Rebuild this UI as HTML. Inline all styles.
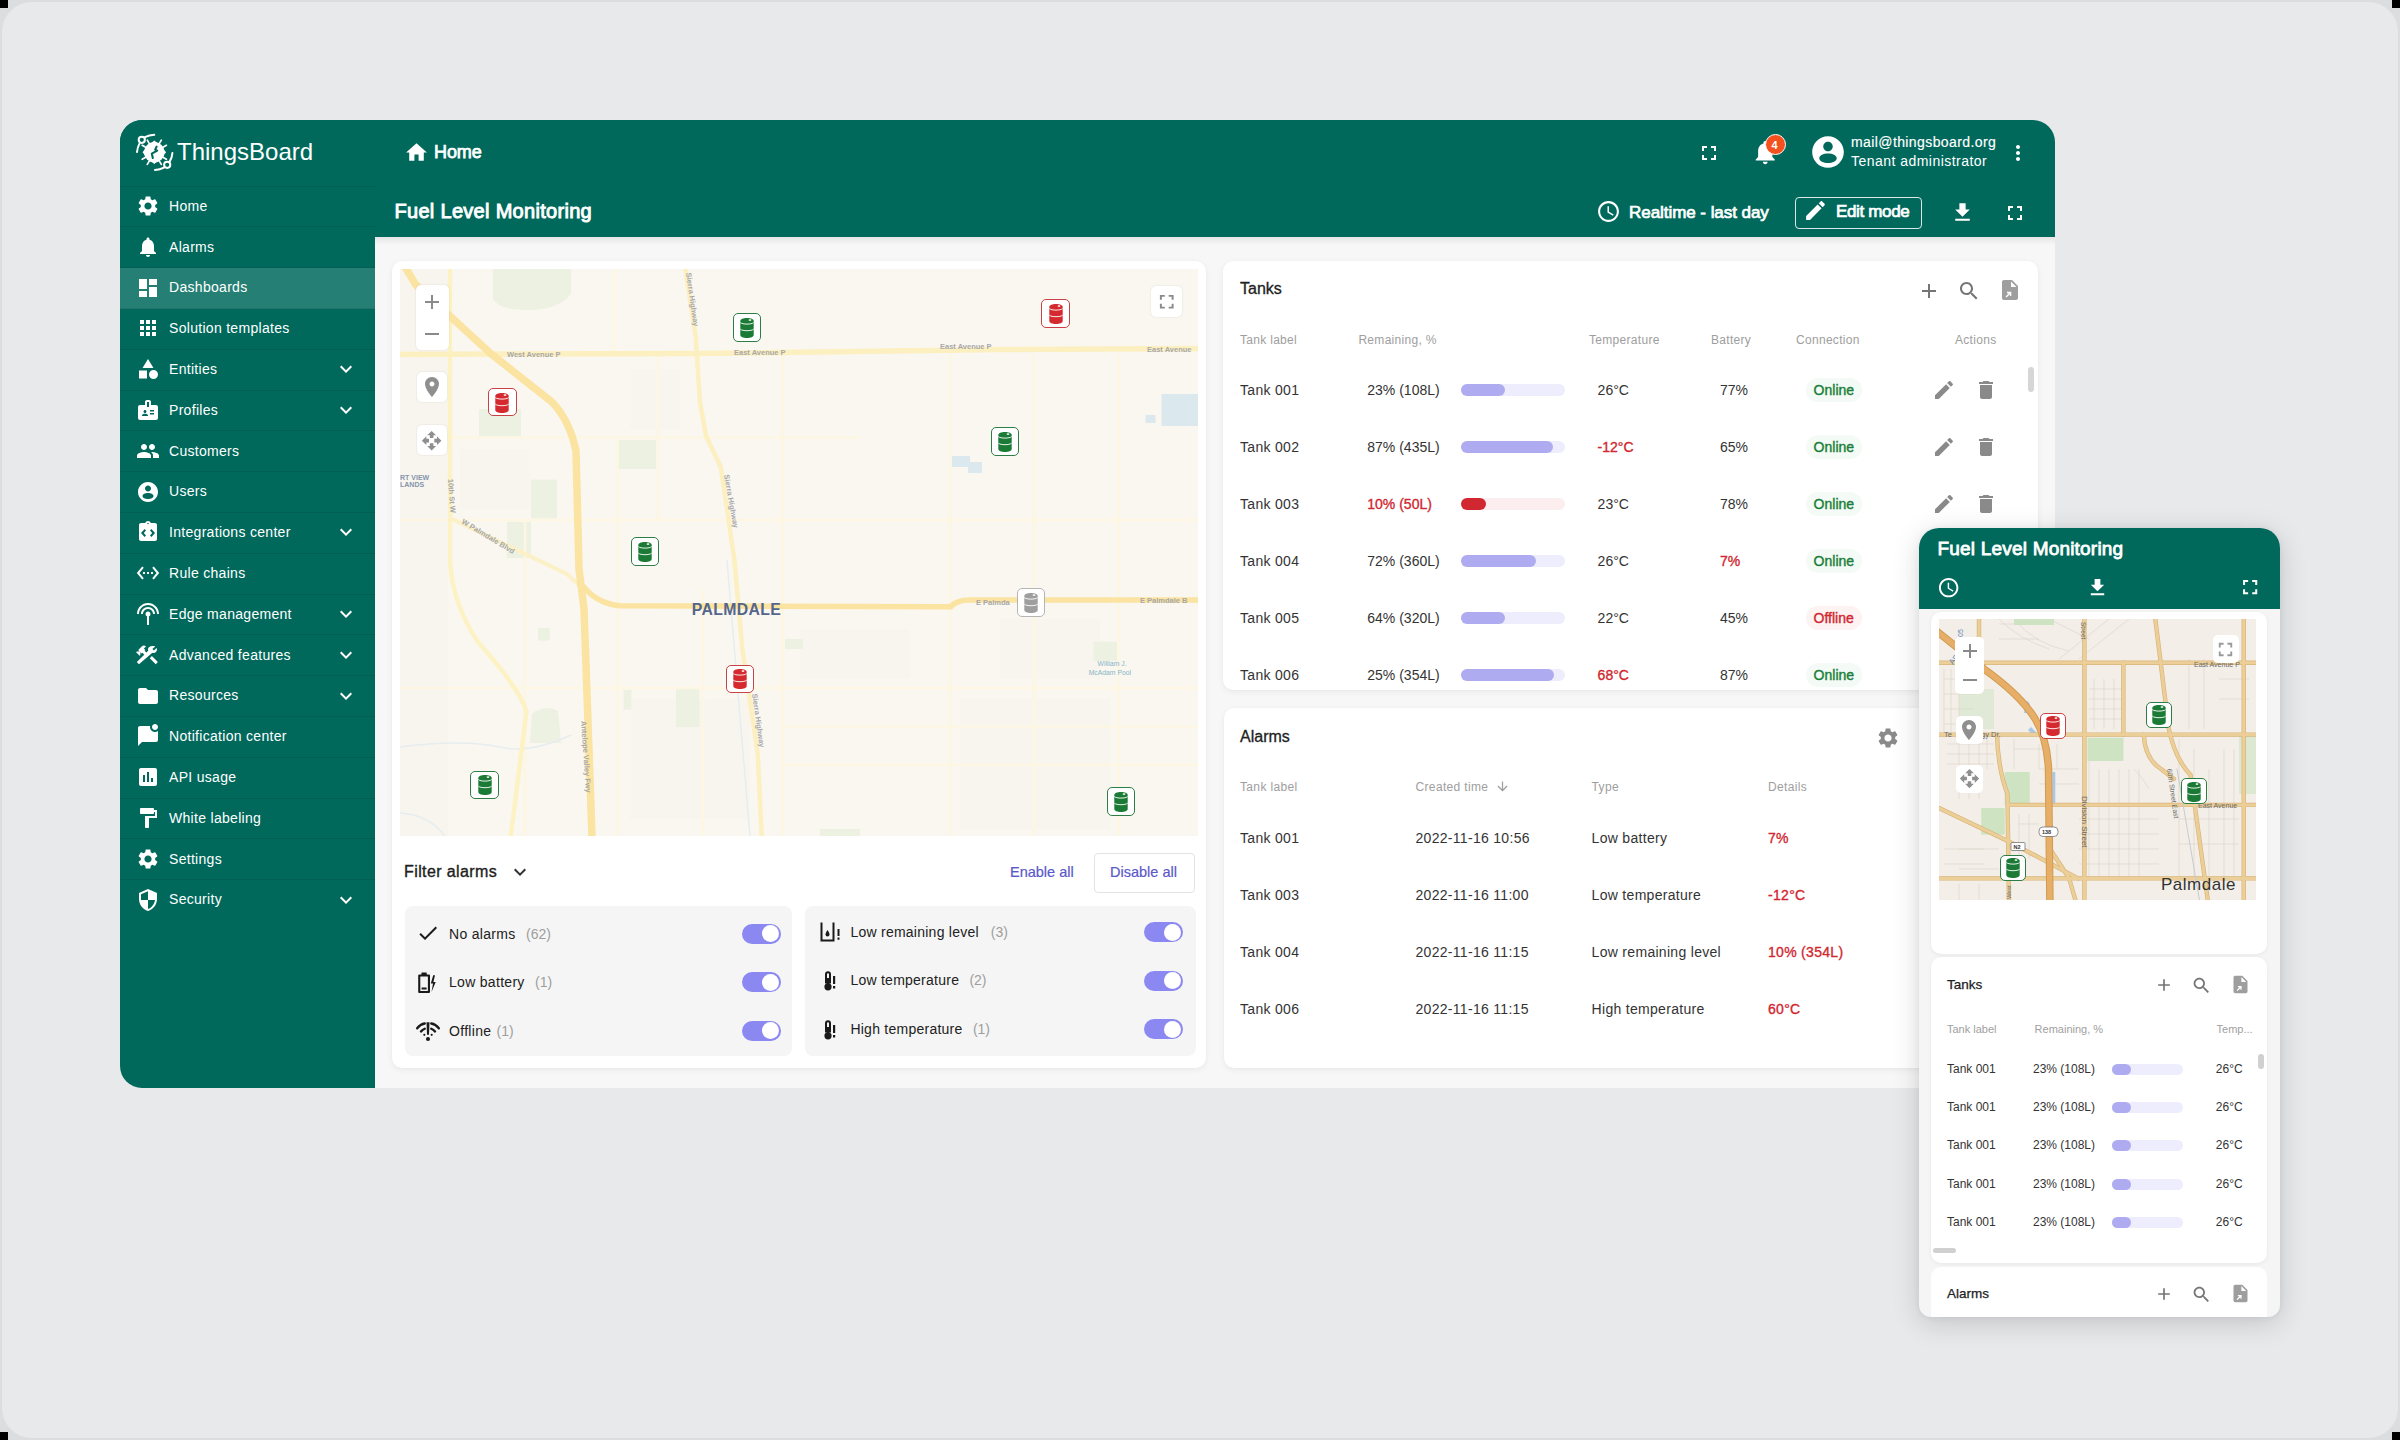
<!DOCTYPE html>
<html><head><meta charset="utf-8">
<style>
*{margin:0;padding:0;box-sizing:border-box}
html,body{width:2400px;height:1440px;overflow:hidden;background:#dcdddf}
body{font-family:"Liberation Sans",sans-serif;position:relative}
.abs{position:absolute}
.t{position:absolute;white-space:nowrap;line-height:1}
svg.i{position:absolute;overflow:visible}
</style></head>
<body>

<div class="abs" style="left:2px;top:2px;width:2396px;height:1436px;background:#e8e9eb;border-radius:30px"></div>
<div class="abs" style="left:0px;top:0px;width:8px;height:8px;background:#000"></div>
<div class="abs" style="left:2392px;top:0px;width:8px;height:8px;background:#000"></div>
<div class="abs" style="left:0px;top:1432px;width:8px;height:8px;background:#000"></div>
<div class="abs" style="left:2392px;top:1432px;width:8px;height:8px;background:#000"></div>
<div class="abs" style="left:120px;top:120px;width:1935px;height:968px;background:#f7f7f7;border-radius:22px 22px 0 22px"></div>
<div class="abs" style="left:120px;top:120px;width:1935px;height:117px;background:#00695c;border-radius:22px 22px 0 0"></div>
<div class="abs" style="left:120px;top:120px;width:255px;height:968px;background:#00695c;border-radius:22px 0 0 22px"></div>
<div class="abs" style="left:375px;top:237px;width:1680px;height:8px;background:linear-gradient(rgba(0,0,0,0.07),rgba(0,0,0,0))"></div>
<div class="abs" style="left:120px;top:186px;width:255px;height:1px;background:rgba(0,0,0,0.10)"></div>
<div class="abs" style="left:120px;top:226.4px;width:255px;height:1px;background:rgba(0,0,0,0.09)"></div>
<svg class="i" style="left:136px;top:194.0px;width:24px;height:24px" viewBox="0 0 24 24"><path fill="#fff" d="M19.14 12.94c.04-.3.06-.61.06-.94 0-.32-.02-.64-.07-.94l2.03-1.58c.18-.14.23-.41.12-.61l-1.92-3.32c-.12-.22-.37-.29-.59-.22l-2.39.96c-.5-.38-1.03-.7-1.62-.94l-.36-2.54c-.04-.24-.24-.41-.48-.41h-3.84c-.24 0-.43.17-.47.41l-.36 2.54c-.59.24-1.13.57-1.62.94l-2.39-.96c-.22-.08-.47 0-.59.22L2.74 8.87c-.12.21-.08.47.12.61l2.03 1.58c-.05.3-.09.63-.09.94s.02.64.07.94l-2.03 1.58c-.18.14-.23.41-.12.61l1.92 3.32c.12.22.37.29.59.22l2.39-.96c.5.38 1.03.7 1.62.94l.36 2.54c.05.24.24.41.48.41h3.84c.24 0 .44-.17.47-.41l.36-2.54c.59-.24 1.130-.56 1.62-.94l2.39.96c.22.08.47 0 .59-.22l1.92-3.32c.12-.22.07-.47-.12-.61l-2.01-1.58zM12 15.6c-1.98 0-3.6-1.62-3.6-3.6s1.62-3.6 3.6-3.6 3.6 1.62 3.6 3.6-1.62 3.6-3.6 3.6z"/></svg>
<div class="t" style="left:169.00px;top:198.75px;font-size:14px;color:#fff;letter-spacing:0.3px;">Home</div>
<div class="abs" style="left:120px;top:267.2px;width:255px;height:1px;background:rgba(0,0,0,0.09)"></div>
<svg class="i" style="left:136px;top:234.8px;width:24px;height:24px" viewBox="0 0 24 24"><path fill="#fff" d="M12 22c1.1 0 2-.9 2-2h-4c0 1.1.89 2 2 2zm6-6v-5c0-3.07-1.64-5.64-4.5-6.32V4c0-.83-.67-1.5-1.5-1.5s-1.5.67-1.5 1.5v.68C7.63 5.36 6 7.92 6 11v5l-2 2v1h16v-1l-2-2z"/></svg>
<div class="t" style="left:169.00px;top:239.55px;font-size:14px;color:#fff;letter-spacing:0.3px;">Alarms</div>
<div class="abs" style="left:120px;top:267.8px;width:255px;height:40.8px;background:rgba(255,255,255,0.15)"></div>
<div class="abs" style="left:120px;top:308.0px;width:255px;height:1px;background:rgba(0,0,0,0.09)"></div>
<svg class="i" style="left:136px;top:275.6px;width:24px;height:24px" viewBox="0 0 24 24"><path fill="#fff" d="M3 13h8V3H3v10zm0 8h8v-6H3v6zm10 0h8V11h-8v10zm0-18v6h8V3h-8z"/></svg>
<div class="t" style="left:169.00px;top:280.35px;font-size:14px;color:#fff;letter-spacing:0.3px;">Dashboards</div>
<div class="abs" style="left:120px;top:348.79999999999995px;width:255px;height:1px;background:rgba(0,0,0,0.09)"></div>
<svg class="i" style="left:136px;top:316.4px;width:24px;height:24px" viewBox="0 0 24 24"><path fill="#fff" d="M4 8h4V4H4v4zm6 12h4v-4h-4v4zm-6 0h4v-4H4v4zm0-6h4v-4H4v4zm6 0h4v-4h-4v4zm6-10v4h4V4h-4zm-6 4h4V4h-4v4zm6 6h4v-4h-4v4zm0 6h4v-4h-4v4z"/></svg>
<div class="t" style="left:169.00px;top:321.15px;font-size:14px;color:#fff;letter-spacing:0.3px;">Solution templates</div>
<div class="abs" style="left:120px;top:389.59999999999997px;width:255px;height:1px;background:rgba(0,0,0,0.09)"></div>
<svg class="i" style="left:136px;top:357.2px;width:24px;height:24px" viewBox="0 0 24 24"><path fill="#fff" d="M12 2l-5.5 9h11zM17.5 13a4.5 4.5 0 1 0 0 9 4.5 4.5 0 1 0 0-9zM3 13.5h8v8H3z"/></svg>
<div class="t" style="left:169.00px;top:361.95px;font-size:14px;color:#fff;letter-spacing:0.3px;">Entities</div>
<svg class="i" style="left:334px;top:357.2px;width:24px;height:24px" viewBox="0 0 24 24"><path fill="#fff" d="M16.59 8.59L12 13.17 7.41 8.59 6 10l6 6 6-6z"/></svg>
<div class="abs" style="left:120px;top:430.4px;width:255px;height:1px;background:rgba(0,0,0,0.09)"></div>
<svg class="i" style="left:136px;top:398.0px;width:24px;height:24px" viewBox="0 0 24 24"><path fill="#fff" d="M20 7h-5V4c0-1.1-.9-2-2-2h-2c-1.1 0-2 .9-2 2v3H4c-1.1 0-2 .9-2 2v11c0 1.1.9 2 2 2h16c1.1 0 2-.9 2-2V9c0-1.1-.9-2-2-2zM9 12c.83 0 1.5.67 1.5 1.5S9.830 15 9 15s-1.5-.67-1.5-1.5S8.17 12 9 12zm3 6H6v-.43c0-.6.36-1.15.92-1.39.64-.28 1.34-.43 2.08-.43s1.44.15 2.08.43c.55.24.92.78.92 1.39V18zm1-9h-2V4h2v5zm5 7.5h-4V15h4v1.5zm0-3h-4V12h4v1.5z"/></svg>
<div class="t" style="left:169.00px;top:402.75px;font-size:14px;color:#fff;letter-spacing:0.3px;">Profiles</div>
<svg class="i" style="left:334px;top:398.0px;width:24px;height:24px" viewBox="0 0 24 24"><path fill="#fff" d="M16.59 8.59L12 13.17 7.41 8.59 6 10l6 6 6-6z"/></svg>
<div class="abs" style="left:120px;top:471.19999999999993px;width:255px;height:1px;background:rgba(0,0,0,0.09)"></div>
<svg class="i" style="left:136px;top:438.79999999999995px;width:24px;height:24px" viewBox="0 0 24 24"><path fill="#fff" d="M16 11c1.66 0 2.99-1.34 2.99-3S17.66 5 16 5c-1.66 0-3 1.34-3 3s1.34 3 3 3zm-8 0c1.66 0 2.99-1.34 2.99-3S9.66 5 8 5C6.34 5 5 6.34 5 8s1.34 3 3 3zm0 2c-2.33 0-7 1.17-7 3.5V19h14v-2.5c0-2.33-4.67-3.5-7-3.5zm8 0c-.29 0-.62.02-.97.05 1.16.84 1.97 1.97 1.970 3.45V19h6v-2.5c0-2.33-4.67-3.5-7-3.5z"/></svg>
<div class="t" style="left:169.00px;top:443.55px;font-size:14px;color:#fff;letter-spacing:0.3px;">Customers</div>
<div class="abs" style="left:120px;top:511.99999999999994px;width:255px;height:1px;background:rgba(0,0,0,0.09)"></div>
<svg class="i" style="left:136px;top:479.59999999999997px;width:24px;height:24px" viewBox="0 0 24 24"><path fill="#fff" d="M12 2C6.48 2 2 6.48 2 12s4.48 10 10 10 10-4.48 10-10S17.52 2 12 2zm0 3.5c1.66 0 3 1.34 3 3s-1.34 3-3 3-3-1.34-3-3 1.34-3 3-3zM12 13c2.9 0 5.5 1.300 5.5 3s-2.6 3-5.5 3-5.5-1.300-5.5-3 2.6-3 5.5-3z"/></svg>
<div class="t" style="left:169.00px;top:484.35px;font-size:14px;color:#fff;letter-spacing:0.3px;">Users</div>
<div class="abs" style="left:120px;top:552.8px;width:255px;height:1px;background:rgba(0,0,0,0.09)"></div>
<svg class="i" style="left:136px;top:520.4px;width:24px;height:24px" viewBox="0 0 24 24"><path fill="#fff" d="M19 3h-4.18C14.4 1.84 13.3 1 12 1s-2.4.84-2.82 2H5c-1.1 0-2 .9-2 2v14c0 1.1.9 2 2 2h14c1.1 0 2-.9 2-2V5c0-1.1-.9-2-2-2zM12 2.75c.41 0 .75.34.75.75s-.34.75-.75.75-.75-.34-.75-.75.34-.75.75-.75zM10 15.5L8.6 17 5 13l3.6-4L10 10.5 7.8 13zM14 15.5l2.2-2.500L14 10.5 15.4 9 19 13l-3.6 4z"/></svg>
<div class="t" style="left:169.00px;top:525.15px;font-size:14px;color:#fff;letter-spacing:0.3px;">Integrations center</div>
<svg class="i" style="left:334px;top:520.4px;width:24px;height:24px" viewBox="0 0 24 24"><path fill="#fff" d="M16.59 8.59L12 13.17 7.41 8.59 6 10l6 6 6-6z"/></svg>
<div class="abs" style="left:120px;top:593.6px;width:255px;height:1px;background:rgba(0,0,0,0.09)"></div>
<svg class="i" style="left:136px;top:561.2px;width:24px;height:24px" viewBox="0 0 24 24"><path fill="#fff" d="M7.77 6.76L6.23 5.48.82 12l5.41 6.52 1.54-1.28L3.42 12l4.35-5.24zM7 13h2v-2H7v2zm10-2h-2v2h2v-2zm-6 2h2v-2h-2v2zm6.77-7.52l-1.54 1.28L20.58 12l-4.35 5.24 1.54 1.28L23.18 12l-5.41-6.52z"/></svg>
<div class="t" style="left:169.00px;top:565.95px;font-size:14px;color:#fff;letter-spacing:0.3px;">Rule chains</div>
<div class="abs" style="left:120px;top:634.4px;width:255px;height:1px;background:rgba(0,0,0,0.09)"></div>
<svg class="i" style="left:136px;top:602.0px;width:24px;height:24px" viewBox="0 0 24 24"><path fill="#fff" d="M12 5c-3.87 0-7 3.13-7 7h2c0-2.76 2.24-5 5-5s5 2.24 5 5h2c0-3.87-3.13-7-7-7zm1 9.29c.88-.39 1.5-1.26 1.5-2.290 0-1.38-1.12-2.5-2.5-2.5S9.5 10.62 9.5 12c0 1.02.62 1.9 1.5 2.29V23h2zM12 1C5.93 1 1 5.93 1 12h2c0-4.97 4.03-9 9-9s9 4.03 9 9h2c0-6.07-4.93-11-11-11z"/></svg>
<div class="t" style="left:169.00px;top:606.75px;font-size:14px;color:#fff;letter-spacing:0.3px;">Edge management</div>
<svg class="i" style="left:334px;top:602.0px;width:24px;height:24px" viewBox="0 0 24 24"><path fill="#fff" d="M16.59 8.59L12 13.17 7.41 8.59 6 10l6 6 6-6z"/></svg>
<div class="abs" style="left:120px;top:675.1999999999999px;width:255px;height:1px;background:rgba(0,0,0,0.09)"></div>
<svg class="i" style="left:136px;top:642.8px;width:24px;height:24px" viewBox="0 0 24 24"><path fill="#fff" d="M13.78 15.17l2.12-2.12 6 6-2.12 2.12zM17.5 10c1.93 0 3.5-1.57 3.5-3.5 0-.58-.16-1.12-.41-1.6l-2.7 2.7-1.49-1.49 2.7-2.7c-.48-.25-1.02-.41-1.6-.41C13.57 3 12 4.57 12 6.5c0 .41.08.8.21 1.16l-1.85 1.85-1.78-1.78.71-.71-1.41-1.41L10 3.49c-1.17-1.170-3.07-1.17-4.24 0L2.22 7.03l1.41 1.41H.81l-.71.71 3.54 3.54.71-.71V9.15l1.41 1.41.71-.71 1.78 1.78-7.41 7.41 2.12 2.12L16.34 9.79c.36.13.75.21 1.16.21z"/></svg>
<div class="t" style="left:169.00px;top:647.55px;font-size:14px;color:#fff;letter-spacing:0.3px;">Advanced features</div>
<svg class="i" style="left:334px;top:642.8px;width:24px;height:24px" viewBox="0 0 24 24"><path fill="#fff" d="M16.59 8.59L12 13.17 7.41 8.59 6 10l6 6 6-6z"/></svg>
<div class="abs" style="left:120px;top:715.9999999999999px;width:255px;height:1px;background:rgba(0,0,0,0.09)"></div>
<svg class="i" style="left:136px;top:683.5999999999999px;width:24px;height:24px" viewBox="0 0 24 24"><path fill="#fff" d="M10 4H4c-1.1 0-1.99.9-1.99 2L2 18c0 1.1.9 2 2 2h16c1.1 0 2-.9 2-2V8c0-1.1-.9-2-2-2h-8l-2-2z"/></svg>
<div class="t" style="left:169.00px;top:688.35px;font-size:14px;color:#fff;letter-spacing:0.3px;">Resources</div>
<svg class="i" style="left:334px;top:683.5999999999999px;width:24px;height:24px" viewBox="0 0 24 24"><path fill="#fff" d="M16.59 8.59L12 13.17 7.41 8.59 6 10l6 6 6-6z"/></svg>
<div class="abs" style="left:120px;top:756.8px;width:255px;height:1px;background:rgba(0,0,0,0.09)"></div>
<svg class="i" style="left:136px;top:724.4px;width:24px;height:24px" viewBox="0 0 24 24"><path fill="#fff" d="M22 6.98V16c0 1.1-.9 2-2 2H6l-4 4V4c0-1.1.9-2 2-2h10.1c-.06.32-.1.66-.1 1 0 2.76 2.24 5 5 5 1.13 0 2.16-.39 3-1.02zM16 3c0 1.66 1.34 3 3 3s3-1.34 3-3-1.34-3-3-3-3 1.34-3 3z"/></svg>
<div class="t" style="left:169.00px;top:729.15px;font-size:14px;color:#fff;letter-spacing:0.3px;">Notification center</div>
<div class="abs" style="left:120px;top:797.5999999999999px;width:255px;height:1px;background:rgba(0,0,0,0.09)"></div>
<svg class="i" style="left:136px;top:765.1999999999999px;width:24px;height:24px" viewBox="0 0 24 24"><path fill="#fff" d="M19 3H5c-1.1 0-2 .9-2 2v14c0 1.1.9 2 2 2h14c1.1 0 2-.9 2-2V5c0-1.1-.9-2-2-2zM9 17H7v-7h2v7zm4 0h-2V7h2v10zm4 0h-2v-4h2v4z"/></svg>
<div class="t" style="left:169.00px;top:769.95px;font-size:14px;color:#fff;letter-spacing:0.3px;">API usage</div>
<div class="abs" style="left:120px;top:838.4px;width:255px;height:1px;background:rgba(0,0,0,0.09)"></div>
<svg class="i" style="left:136px;top:806.0px;width:24px;height:24px" viewBox="0 0 24 24"><path fill="#fff" d="M18 4V3c0-.55-.45-1-1-1H5c-.55 0-1 .45-1 1v4c0 .55.45 1 1 1h12c.55 0 1-.45 1-1V6h1v4H9v11c0 .55.45 1 1 1h2c.55 0 1-.45 1-1v-9h8V4h-3z"/></svg>
<div class="t" style="left:169.00px;top:810.75px;font-size:14px;color:#fff;letter-spacing:0.3px;">White labeling</div>
<div class="abs" style="left:120px;top:879.1999999999999px;width:255px;height:1px;background:rgba(0,0,0,0.09)"></div>
<svg class="i" style="left:136px;top:846.8px;width:24px;height:24px" viewBox="0 0 24 24"><path fill="#fff" d="M19.14 12.94c.04-.3.06-.61.06-.94 0-.32-.02-.64-.07-.94l2.03-1.58c.18-.14.23-.41.12-.61l-1.92-3.32c-.12-.22-.37-.29-.59-.22l-2.39.96c-.5-.38-1.03-.7-1.62-.94l-.36-2.54c-.04-.24-.24-.41-.48-.41h-3.84c-.24 0-.43.17-.47.41l-.36 2.54c-.59.24-1.13.57-1.62.94l-2.39-.96c-.22-.08-.47 0-.59.22L2.74 8.87c-.12.21-.08.47.12.61l2.03 1.58c-.05.3-.09.63-.09.94s.02.64.07.94l-2.03 1.58c-.18.14-.23.41-.12.61l1.92 3.32c.12.22.37.29.59.22l2.39-.96c.5.38 1.03.7 1.62.94l.36 2.54c.05.24.24.41.48.41h3.84c.24 0 .44-.17.47-.41l.36-2.54c.59-.24 1.130-.56 1.62-.94l2.39.96c.22.08.47 0 .59-.22l1.92-3.32c.12-.22.07-.47-.12-.61l-2.01-1.58zM12 15.6c-1.98 0-3.6-1.62-3.6-3.6s1.62-3.6 3.6-3.6 3.6 1.62 3.6 3.6-1.62 3.6-3.6 3.6z"/></svg>
<div class="t" style="left:169.00px;top:851.55px;font-size:14px;color:#fff;letter-spacing:0.3px;">Settings</div>
<svg class="i" style="left:136px;top:887.5999999999999px;width:24px;height:24px" viewBox="0 0 24 24"><path fill="#fff" d="M12 1L3 5v6c0 5.55 3.84 10.74 9 12 5.16-1.26 9-6.45 9-12V5l-9-4zm0 10.99h7c-.53 4.12-3.28 7.79-7 8.94V12H5V6.3l7-3.11v8.8z"/></svg>
<div class="t" style="left:169.00px;top:892.35px;font-size:14px;color:#fff;letter-spacing:0.3px;">Security</div>
<svg class="i" style="left:334px;top:887.5999999999999px;width:24px;height:24px" viewBox="0 0 24 24"><path fill="#fff" d="M16.59 8.59L12 13.17 7.41 8.59 6 10l6 6 6-6z"/></svg>
<svg class="i" style="left:130px;top:128px;width:50px;height:50px" viewBox="0 0 50 50">
<g fill="none" stroke="#fff" stroke-width="2" stroke-linecap="round">
<circle cx="11.8" cy="11.8" r="3.1"/><path d="M15 9.2 Q19 7.2 24.3 6.8"/><path d="M9.6 15.4 Q7.4 19.5 7 24"/>
<circle cx="37.2" cy="36.8" r="3.1"/><path d="M39.6 33.6 Q42.2 29.5 42.4 25"/><path d="M34 39.6 Q30 41.8 25 42"/>
</g>
<g fill="#fff"><circle cx="24.3" cy="24.3" r="10.3"/><path d="M24.3 12.5 l3 2.5 h-6z M24.3 36.1 l3 -2.5 h-6z M12.5 24.3 l2.5 3 v-6z M36.1 24.3 l-2.5 3 v-6z"/></g>
<path d="M31.66 28.55 L36.42 31.30 M28.55 31.66 L31.30 36.42 M20.05 31.66 L17.30 36.42 M16.94 28.55 L12.18 31.30 M16.94 20.05 L12.18 17.30 M20.05 16.94 L17.30 12.18 M28.55 16.94 L31.30 12.18 M31.66 20.05 L36.42 17.30" stroke="#fff" stroke-width="1.7" stroke-linecap="round"/>
<path d="M26.6 18.6 L25.2 21.6 L27.2 22.6 L21.8 25.6 L22.8 30" fill="none" stroke="#00695c" stroke-width="2.1" stroke-linejoin="round" stroke-linecap="round"/>
</svg>
<div class="t" style="left:177.00px;top:140.18px;font-size:24px;color:#fff;">ThingsBoard</div>
<svg class="i" style="left:404px;top:140px;width:25px;height:25px" viewBox="0 0 24 24"><path fill="#fff" d="M10 20v-6h4v6h5v-8h3L12 3 2 12h3v8z"/></svg>
<div class="t" style="left:434.00px;top:143.26px;font-size:18px;color:#fff;letter-spacing:-0.1px;-webkit-text-stroke:0.75px #fff;">Home</div>
<div class="t" style="left:394.50px;top:200.57px;font-size:20px;color:#fff;letter-spacing:0.3px;-webkit-text-stroke:0.9px #fff;">Fuel Level Monitoring</div>
<svg class="i" style="left:1697px;top:141px;width:24px;height:24px" viewBox="0 0 24 24"><path fill="#fff" d="M7 14H5v5h5v-2H7v-3zm-2-4h2V7h3V5H5v5zm12 7h-3v2h5v-5h-2v3zM14 5v2h3v3h2V5h-5z"/></svg>
<svg class="i" style="left:1751.2px;top:138.4px;width:28.5px;height:28.5px" viewBox="0 0 24 24"><path fill="#fff" d="M12 22c1.1 0 2-.9 2-2h-4c0 1.1.89 2 2 2zm6-6v-5c0-3.07-1.64-5.64-4.5-6.32V4c0-.83-.67-1.5-1.5-1.5s-1.5.67-1.5 1.5v.68C7.63 5.36 6 7.92 6 11v5l-2 2v1h16v-1l-2-2z"/></svg>
<div class="abs" style="left:1765px;top:134px;width:21px;height:21px;background:#f4511e;border-radius:50%;border:1.2px solid #fff"></div>
<div class="t" style="left:1771.50px;top:139.69px;font-size:11px;color:#fff;font-weight:700;">4</div>
<svg class="i" style="left:1809px;top:133px;width:38px;height:38px" viewBox="0 0 24 24"><path fill="#fff" d="M12 2C6.48 2 2 6.48 2 12s4.48 10 10 10 10-4.48 10-10S17.52 2 12 2zm0 3.5c1.66 0 3 1.34 3 3s-1.34 3-3 3-3-1.34-3-3 1.34-3 3-3zM12 13c2.9 0 5.5 1.300 5.5 3s-2.6 3-5.5 3-5.5-1.300-5.5-3 2.6-3 5.5-3z"/></svg>
<div class="t" style="left:1851.00px;top:134.65px;font-size:14px;color:#fff;letter-spacing:0.4px;-webkit-text-stroke:0.15px #fff;">mail@thingsboard.org</div>
<div class="t" style="left:1851.00px;top:154.15px;font-size:14px;color:#fff;letter-spacing:0.47px;">Tenant administrator</div>
<svg class="i" style="left:2006px;top:141px;width:24px;height:24px" viewBox="0 0 24 24"><path fill="#fff" d="M12 8c1.1 0 2-.9 2-2s-.9-2-2-2-2 .9-2 2 .9 2 2 2zm0 2c-1.1 0-2 .9-2 2s.9 2 2 2 2-.9 2-2-.9-2-2-2zm0 6c-1.1 0-2 .9-2 2s.9 2 2 2 2-.9 2-2-.9-2-2-2z"/></svg>
<svg class="i" style="left:1596px;top:199px;width:25px;height:25px" viewBox="0 0 24 24"><path fill="#fff" d="M11.99 2C6.47 2 2 6.48 2 12s4.47 10 9.99 10C17.52 22 22 17.52 22 12S17.52 2 11.99 2zM12 20c-4.42 0-8-3.58-8-8s3.58-8 8-8 8 3.58 8 8-3.58 8-8 8zm.5-13H11v6l5.25 3.15.75-1.23-4.5-2.67z"/></svg>
<div class="t" style="left:1629.00px;top:203.61px;font-size:17px;color:#fff;letter-spacing:-0.05px;-webkit-text-stroke:0.7px #fff;">Realtime - last day</div>
<div class="abs" style="left:1795px;top:197px;width:127px;height:32px;border:1.5px solid rgba(255,255,255,0.85);border-radius:4px"></div>
<svg class="i" style="left:1803px;top:198px;width:25px;height:25px" viewBox="0 0 24 24"><path fill="#fff" d="M3 17.25V21h3.75L17.81 9.94l-3.75-3.75L3 17.25zM20.71 7.04c.39-.39.39-1.02 0-1.41l-2.34-2.34c-.39-.39-1.02-.39-1.41 0l-1.83 1.83 3.75 3.75 1.83-1.83z"/></svg>
<div class="t" style="left:1836.00px;top:203.11px;font-size:17px;color:#fff;letter-spacing:-0.35px;-webkit-text-stroke:0.7px #fff;">Edit mode</div>
<svg class="i" style="left:1950px;top:200px;width:25px;height:25px" viewBox="0 0 24 24"><path fill="#fff" d="M19 9h-4V3H9v6H5l7 7 7-7zM5 18v2h14v-2H5z"/></svg>
<svg class="i" style="left:2003px;top:201px;width:24px;height:24px" viewBox="0 0 24 24"><path fill="#fff" d="M7 14H5v5h5v-2H7v-3zm-2-4h2V7h3V5H5v5zm12 7h-3v2h5v-5h-2v3zM14 5v2h3v3h2V5h-5z"/></svg>
<div class="abs" style="left:392px;top:261px;width:814px;height:807px;background:#fff;border-radius:10px;box-shadow:0 2px 6px rgba(0,0,0,0.06),0 0 2px rgba(0,0,0,0.03)"></div>
<svg class="i" style="left:400px;top:269px;width:798px;height:567px;overflow:hidden" viewBox="0 0 798 567">
<rect width="798" height="567" fill="#faf7f1"/>
<g fill="#f8f5ee">
<rect x="0" y="0" width="48" height="567"/>
<rect x="60" y="180" width="70" height="60"/><rect x="230" y="100" width="50" height="60"/><rect x="400" y="360" width="110" height="50"/>
<rect x="600" y="350" width="100" height="60"/><rect x="230" y="430" width="120" height="120"/><rect x="560" y="430" width="150" height="130"/>
</g>
<g fill="#edf1e2">
<path d="M93 0 H171 V25 Q160 40 130 41 Q100 42 93 30z"/>
<rect x="79" y="140" width="42" height="27"/>
<rect x="131" y="210.5" width="26" height="39"/>
<rect x="107" y="253" width="24" height="36"/>
<rect x="276" y="419" width="23.4" height="39"/>
<path d="M132 445 Q145 435 158 442 L161 474 H130z"/>
<rect x="693.6" y="372.7" width="23.4" height="19.3"/>
<rect x="138" y="359" width="11.7" height="12.7"/>
<rect x="223.6" y="421" width="7.8" height="19.7"/>
<rect x="219" y="171" width="37" height="29"/>
<rect x="385" y="370" width="18" height="10"/>
<rect x="420" y="560" width="40" height="7"/>
</g>
<g fill="#dbe8ee"><rect x="761.5" y="125" width="36.5" height="32"/><path d="M552 187 H570 V193 H582 V204 H568 V198 H552z"/><rect x="745.5" y="146" width="10" height="8"/></g>
<g fill="none" stroke="#fdf6e2" stroke-width="2.6">
<path d="M50 168.5 H460"/><path d="M0 251 H798"/><path d="M0 419 H798"/><path d="M383 458 H798"/><path d="M383 496 H798"/>
<path d="M214.6 0 V85"/><path d="M258 85 V251"/><path d="M217.7 168 V567"/><path d="M382.7 85 V567"/><path d="M550 85 V567"/><path d="M634 85 V567"/><path d="M719 85 V567"/>
<path d="M125 251 V567"/><path d="M303.3 320 V567"/>

</g>
<g fill="none" stroke="#e6edf0" stroke-width="1.5"><path d="M0 478 Q60 470 100 478 Q130 485 171 466"/><path d="M0 544 Q30 546 44.7 567"/><path d="M327 291 L336 400 L350 567"/></g>
<g fill="none" stroke-linecap="butt">
<path d="M50 -2 V291 Q52 334 77.8 372.7 Q120 420 126.4 442.7 L110.8 567" stroke="#fcf2c4" stroke-width="4.5"/>
<path d="M0 85.4 L300 84.5 L600 80.5 L798 79.5" stroke="#fcefc0" stroke-width="5.5"/>
<path d="M50 249 L167 305 L180 317" stroke="#fcf0c6" stroke-width="4"/>
<path d="M285.4 0 L295.8 68.75 L300 133 L306 166.7 L320.8 198 L334.4 291 L342.2 378.5 L357.8 485.4 L361.7 567" stroke="#fcefc0" stroke-width="4.5"/>
<path d="M183 317 Q197 334.7 220 336.7 L551 337.7 Q556 331 570 331 L798 331" stroke="#fbe3a1" stroke-width="5.5"/>
<path d="M4 -4 L15.6 15.6 L91.7 85.4 L152 133 Q170 152 176 182 L179 300 L184 340 L192 567" stroke="#fbe3a1" stroke-width="7.5"/>
</g>
<g fill="#a8a8a8" font-family="Liberation Sans" font-size="7.5" font-weight="700">
<text x="107" y="88">West Avenue P</text>
<text x="334" y="86">East Avenue P</text>
<text x="540" y="80">East Avenue P</text>
<text x="747" y="83">East Avenue</text>
<text x="740" y="334">E Palmdale B</text>
<text x="576" y="335.7">E Palmda</text>
<text transform="translate(286,4) rotate(82)">Sierra Highway</text>
<text transform="translate(324,206) rotate(80)">Sierra Highway</text>
<text transform="translate(352,425) rotate(82)">Sierra Highway</text>
<text transform="translate(48,210) rotate(86)">10th St W</text>
<text transform="translate(61,254) rotate(31)">W Palmdale Blvd</text>
<text transform="translate(181,452) rotate(86)">Antelope Valley Fwy</text>
</g>
<text x="0" y="211" font-family="Liberation Sans" font-size="7" font-weight="700" fill="#8595ac">RT VIEW</text>
<text x="0" y="218" font-family="Liberation Sans" font-size="7" font-weight="700" fill="#8595ac">LANDS</text>
<text x="697.5" y="397" font-family="Liberation Sans" font-size="6.8" fill="#86b4c8">William J.</text>
<text x="688.7" y="405.6" font-family="Liberation Sans" font-size="6.8" fill="#86b4c8">McAdam Pool</text>
<text x="291.7" y="346.4" font-family="Liberation Sans" font-size="15.8" font-weight="700" fill="#54678a" letter-spacing="0.35">PALMDALE</text>
</svg>
<div class="abs" style="left:732.75px;top:313.45px;width:28.5px;height:28.5px;background:#fff;border:1.5px solid #2d7d46;border-radius:5px"></div>
<svg class="i" style="left:737.00px;top:316.20px;width:20px;height:24px" viewBox="-3 -2 20 24"><g transform="translate(0.00,0.00) scale(1.0)"><path fill="#1b7a35" d="M0.3 3 C0.3 1 3.3 0 7 0 C10.7 0 13.7 1 13.7 3 V17 C13.7 19 10.7 20 7 20 C3.3 20 0.3 19 0.3 17 Z"/><path fill="none" stroke="#fff" stroke-width="0.9" d="M0.3 4.6 C2.5 6.6 11.5 6.6 13.7 4.6 M0.3 11.2 C2.5 13.2 11.5 13.2 13.7 11.2"/><ellipse cx="10" cy="2.1" rx="1.5" ry="0.8" fill="#fff"/></g></svg>
<div class="abs" style="left:1041.45px;top:299.35px;width:28.5px;height:28.5px;background:#fff;border:1.5px solid #c74348;border-radius:5px"></div>
<svg class="i" style="left:1045.70px;top:302.10px;width:20px;height:24px" viewBox="-3 -2 20 24"><g transform="translate(0.00,0.00) scale(1.0)"><path fill="#d42a2f" d="M0.3 3 C0.3 1 3.3 0 7 0 C10.7 0 13.7 1 13.7 3 V17 C13.7 19 10.7 20 7 20 C3.3 20 0.3 19 0.3 17 Z"/><path fill="none" stroke="#fff" stroke-width="0.9" d="M0.3 4.6 C2.5 6.6 11.5 6.6 13.7 4.6 M0.3 11.2 C2.5 13.2 11.5 13.2 13.7 11.2"/><ellipse cx="10" cy="2.1" rx="1.5" ry="0.8" fill="#fff"/></g></svg>
<div class="abs" style="left:488.05px;top:387.95px;width:28.5px;height:28.5px;background:#fff;border:1.5px solid #c74348;border-radius:5px"></div>
<svg class="i" style="left:492.30px;top:390.70px;width:20px;height:24px" viewBox="-3 -2 20 24"><g transform="translate(0.00,0.00) scale(1.0)"><path fill="#d42a2f" d="M0.3 3 C0.3 1 3.3 0 7 0 C10.7 0 13.7 1 13.7 3 V17 C13.7 19 10.7 20 7 20 C3.3 20 0.3 19 0.3 17 Z"/><path fill="none" stroke="#fff" stroke-width="0.9" d="M0.3 4.6 C2.5 6.6 11.5 6.6 13.7 4.6 M0.3 11.2 C2.5 13.2 11.5 13.2 13.7 11.2"/><ellipse cx="10" cy="2.1" rx="1.5" ry="0.8" fill="#fff"/></g></svg>
<div class="abs" style="left:990.75px;top:427.35px;width:28.5px;height:28.5px;background:#fff;border:1.5px solid #2d7d46;border-radius:5px"></div>
<svg class="i" style="left:995.00px;top:430.10px;width:20px;height:24px" viewBox="-3 -2 20 24"><g transform="translate(0.00,0.00) scale(1.0)"><path fill="#1b7a35" d="M0.3 3 C0.3 1 3.3 0 7 0 C10.7 0 13.7 1 13.7 3 V17 C13.7 19 10.7 20 7 20 C3.3 20 0.3 19 0.3 17 Z"/><path fill="none" stroke="#fff" stroke-width="0.9" d="M0.3 4.6 C2.5 6.6 11.5 6.6 13.7 4.6 M0.3 11.2 C2.5 13.2 11.5 13.2 13.7 11.2"/><ellipse cx="10" cy="2.1" rx="1.5" ry="0.8" fill="#fff"/></g></svg>
<div class="abs" style="left:630.55px;top:537.15px;width:28.5px;height:28.5px;background:#fff;border:1.5px solid #2d7d46;border-radius:5px"></div>
<svg class="i" style="left:634.80px;top:539.90px;width:20px;height:24px" viewBox="-3 -2 20 24"><g transform="translate(0.00,0.00) scale(1.0)"><path fill="#1b7a35" d="M0.3 3 C0.3 1 3.3 0 7 0 C10.7 0 13.7 1 13.7 3 V17 C13.7 19 10.7 20 7 20 C3.3 20 0.3 19 0.3 17 Z"/><path fill="none" stroke="#fff" stroke-width="0.9" d="M0.3 4.6 C2.5 6.6 11.5 6.6 13.7 4.6 M0.3 11.2 C2.5 13.2 11.5 13.2 13.7 11.2"/><ellipse cx="10" cy="2.1" rx="1.5" ry="0.8" fill="#fff"/></g></svg>
<div class="abs" style="left:1016.75px;top:588.45px;width:28.5px;height:28.5px;background:#fff;border:1.5px solid #b5b5b5;border-radius:5px"></div>
<svg class="i" style="left:1021.00px;top:591.20px;width:20px;height:24px" viewBox="-3 -2 20 24"><g transform="translate(0.00,0.00) scale(1.0)"><path fill="#9e9e9e" d="M0.3 3 C0.3 1 3.3 0 7 0 C10.7 0 13.7 1 13.7 3 V17 C13.7 19 10.7 20 7 20 C3.3 20 0.3 19 0.3 17 Z"/><path fill="none" stroke="#fff" stroke-width="0.9" d="M0.3 4.6 C2.5 6.6 11.5 6.6 13.7 4.6 M0.3 11.2 C2.5 13.2 11.5 13.2 13.7 11.2"/><ellipse cx="10" cy="2.1" rx="1.5" ry="0.8" fill="#fff"/></g></svg>
<div class="abs" style="left:725.75px;top:664.55px;width:28.5px;height:28.5px;background:#fff;border:1.5px solid #c74348;border-radius:5px"></div>
<svg class="i" style="left:730.00px;top:667.30px;width:20px;height:24px" viewBox="-3 -2 20 24"><g transform="translate(0.00,0.00) scale(1.0)"><path fill="#d42a2f" d="M0.3 3 C0.3 1 3.3 0 7 0 C10.7 0 13.7 1 13.7 3 V17 C13.7 19 10.7 20 7 20 C3.3 20 0.3 19 0.3 17 Z"/><path fill="none" stroke="#fff" stroke-width="0.9" d="M0.3 4.6 C2.5 6.6 11.5 6.6 13.7 4.6 M0.3 11.2 C2.5 13.2 11.5 13.2 13.7 11.2"/><ellipse cx="10" cy="2.1" rx="1.5" ry="0.8" fill="#fff"/></g></svg>
<div class="abs" style="left:470.35px;top:770.55px;width:28.5px;height:28.5px;background:#fff;border:1.5px solid #2d7d46;border-radius:5px"></div>
<svg class="i" style="left:474.60px;top:773.30px;width:20px;height:24px" viewBox="-3 -2 20 24"><g transform="translate(0.00,0.00) scale(1.0)"><path fill="#1b7a35" d="M0.3 3 C0.3 1 3.3 0 7 0 C10.7 0 13.7 1 13.7 3 V17 C13.7 19 10.7 20 7 20 C3.3 20 0.3 19 0.3 17 Z"/><path fill="none" stroke="#fff" stroke-width="0.9" d="M0.3 4.6 C2.5 6.6 11.5 6.6 13.7 4.6 M0.3 11.2 C2.5 13.2 11.5 13.2 13.7 11.2"/><ellipse cx="10" cy="2.1" rx="1.5" ry="0.8" fill="#fff"/></g></svg>
<div class="abs" style="left:1106.75px;top:787.45px;width:28.5px;height:28.5px;background:#fff;border:1.5px solid #2d7d46;border-radius:5px"></div>
<svg class="i" style="left:1111.00px;top:790.20px;width:20px;height:24px" viewBox="-3 -2 20 24"><g transform="translate(0.00,0.00) scale(1.0)"><path fill="#1b7a35" d="M0.3 3 C0.3 1 3.3 0 7 0 C10.7 0 13.7 1 13.7 3 V17 C13.7 19 10.7 20 7 20 C3.3 20 0.3 19 0.3 17 Z"/><path fill="none" stroke="#fff" stroke-width="0.9" d="M0.3 4.6 C2.5 6.6 11.5 6.6 13.7 4.6 M0.3 11.2 C2.5 13.2 11.5 13.2 13.7 11.2"/><ellipse cx="10" cy="2.1" rx="1.5" ry="0.8" fill="#fff"/></g></svg>
<div class="abs" style="left:416px;top:285.3px;width:32.5px;height:64.5px;background:#fff;border-radius:5px;box-shadow:0 0 2px rgba(0,0,0,0.12)"></div>
<svg class="i" style="left:420px;top:289.5px;width:24px;height:24px" viewBox="0 0 24 24"><path fill="#8a8a8a" d="M19 13h-6v6h-2v-6H5v-2h6V5h2v6h6v2z"/></svg>
<svg class="i" style="left:420px;top:322px;width:24px;height:24px" viewBox="0 0 24 24"><path fill="#8a8a8a" d="M19 13H5v-2h14v2z"/></svg>
<div class="abs" style="left:416.7px;top:372px;width:30px;height:30px;background:#fff;border-radius:5px;box-shadow:0 0 2px rgba(0,0,0,0.12)"></div>
<svg class="i" style="left:420px;top:374.7px;width:24px;height:24px" viewBox="0 0 24 24"><path fill="#8f8f8f" d="M12 2C8.13 2 5 5.13 5 9c0 5.25 7 13 7 13s7-7.75 7-13c0-3.87-3.13-7-7-7zm0 9.5c-1.38 0-2.5-1.12-2.5-2.5s1.12-2.5 2.5-2.5 2.5 1.12 2.5 2.5-1.12 2.5-2.5 2.5z"/></svg>
<div class="abs" style="left:416.7px;top:425.3px;width:30px;height:29.5px;background:#fff;border-radius:5px;box-shadow:0 0 2px rgba(0,0,0,0.12)"></div>
<svg class="i" style="left:421.3px;top:429.5px;width:21.3px;height:21.3px" viewBox="0 0 24 24"><path fill="#8f8f8f" d="M10 9h4V6h3l-5-5-5 5h3v3zm-1 1H6V7l-5 5 5 5v-3h3v-4zm14 2l-5-5v3h-3v4h3v3l5-5zm-9 3h-4v3H7l5 5 5-5h-3v-3z"/></svg>
<div class="abs" style="left:1151px;top:286px;width:30.5px;height:30.5px;background:#fff;border-radius:5px;box-shadow:0 0 2px rgba(0,0,0,0.12)"></div>
<svg class="i" style="left:1154.5px;top:289.5px;width:23.5px;height:23.5px" viewBox="0 0 24 24"><path fill="#8a8a8a" d="M7 14H5v5h5v-2H7v-3zm-2-4h2V7h3V5H5v5zm12 7h-3v2h5v-5h-2v3zM14 5v2h3v3h2V5h-5z"/></svg>
<div class="t" style="left:404.00px;top:863.65px;font-size:16px;color:#212121;letter-spacing:0.4px;-webkit-text-stroke:0.35px #212121;">Filter alarms</div>
<svg class="i" style="left:507.5px;top:859.5px;width:24px;height:24px" viewBox="0 0 24 24"><path fill="#333" d="M16.59 8.59L12 13.17 7.41 8.59 6 10l6 6 6-6z"/></svg>
<div class="t" style="left:1010.00px;top:865.02px;font-size:14.5px;color:#5b58c9;-webkit-text-stroke:0.2px #5b58c9;">Enable all</div>
<div class="abs" style="left:1093.5px;top:853px;width:101px;height:39.5px;border:1px solid #e3e3e3;border-radius:4px;background:#fff"></div>
<div class="t" style="left:1110.00px;top:865.02px;font-size:14.5px;color:#5b58c9;-webkit-text-stroke:0.2px #5b58c9;">Disable all</div>
<div class="abs" style="left:404.5px;top:905.8px;width:387.5px;height:150.5px;background:#f5f5f5;border-radius:8px"></div>
<div class="abs" style="left:804.5px;top:905.8px;width:391px;height:150.5px;background:#f5f5f5;border-radius:8px"></div>
<div class="t" style="left:449.00px;top:926.85px;font-size:14px;color:#212121;letter-spacing:0.3px;">No alarms</div>
<div class="t" style="left:526.00px;top:926.85px;font-size:14px;color:#9e9e9e;">(62)</div>
<div class="abs" style="left:742px;top:923.7px;width:38.5px;height:20px;background:#8c88f2;border-radius:10px"></div>
<div class="abs" style="left:761.5px;top:925.2px;width:17px;height:17px;background:#fff;border-radius:50%"></div>
<div class="t" style="left:449.00px;top:975.35px;font-size:14px;color:#212121;letter-spacing:0.3px;">Low battery</div>
<div class="t" style="left:535.00px;top:975.35px;font-size:14px;color:#9e9e9e;">(1)</div>
<div class="abs" style="left:742px;top:972.2px;width:38.5px;height:20px;background:#8c88f2;border-radius:10px"></div>
<div class="abs" style="left:761.5px;top:973.7px;width:17px;height:17px;background:#fff;border-radius:50%"></div>
<div class="t" style="left:449.00px;top:1023.75px;font-size:14px;color:#212121;letter-spacing:0.3px;">Offline</div>
<div class="t" style="left:496.50px;top:1023.75px;font-size:14px;color:#9e9e9e;">(1)</div>
<div class="abs" style="left:742px;top:1020.5999999999999px;width:38.5px;height:20px;background:#8c88f2;border-radius:10px"></div>
<div class="abs" style="left:761.5px;top:1022.0999999999999px;width:17px;height:17px;background:#fff;border-radius:50%"></div>
<svg class="i" style="left:416px;top:921px;width:24px;height:24px" viewBox="0 0 24 24"><path fill="#1a1a1a" d="M9 16.17L4.83 12l-1.42 1.41L9 19 21 7l-1.41-1.41z"/></svg>
<svg class="i" style="left:414px;top:970px;width:26px;height:26px" viewBox="0 0 26 26"><path fill="#1a1a1a" d="M7.5 2.4h5.2v2H15a1 1 0 0 1 1 1V22a1 1 0 0 1-1 1H5.2a1 1 0 0 1-1-1V5.4a1 1 0 0 1 1-1h2.3zM6.3 6.4V21h7.6V6.4zM7.6 17.6h5v2h-5zM19.2 5.2l-2.4 8.3h2.2l-1.5 8.6 4.2-10.2h-2.3l1.6-6.7z"/></svg>
<svg class="i" style="left:415px;top:1019px;width:26px;height:26px" viewBox="0 0 24 24"><g fill="none" stroke="#1a1a1a" stroke-width="2.2" stroke-linecap="round"><path d="M2 8.5 C4 6 6.5 4.6 9 4.2"/><path d="M22 8.5 C20 6 17.5 4.6 15 4.2"/><path d="M5.5 11.5 C6.5 10.3 7.6 9.5 9 9"/><path d="M18.5 11.5 C17.5 10.3 16.4 9.5 15 9"/></g><path fill="#1a1a1a" d="M10.6 3h2.8l-.5 11.5h-1.8z"/><circle cx="12" cy="18.5" r="1.9" fill="#1a1a1a"/><circle cx="8.6" cy="14.6" r="1" fill="#1a1a1a"/><circle cx="15.4" cy="14.6" r="1" fill="#1a1a1a"/></svg>
<div class="t" style="left:850.40px;top:924.75px;font-size:14px;color:#212121;letter-spacing:0.25px;">Low remaining level</div>
<div class="t" style="left:990.80px;top:924.75px;font-size:14px;color:#9e9e9e;">(3)</div>
<div class="abs" style="left:1144px;top:922.0px;width:38.5px;height:20px;background:#8c88f2;border-radius:10px"></div>
<div class="abs" style="left:1163.5px;top:923.5px;width:17px;height:17px;background:#fff;border-radius:50%"></div>
<div class="t" style="left:850.40px;top:973.45px;font-size:14px;color:#212121;letter-spacing:0.25px;">Low temperature</div>
<div class="t" style="left:969.40px;top:973.45px;font-size:14px;color:#9e9e9e;">(2)</div>
<div class="abs" style="left:1144px;top:970.6999999999999px;width:38.5px;height:20px;background:#8c88f2;border-radius:10px"></div>
<div class="abs" style="left:1163.5px;top:972.1999999999999px;width:17px;height:17px;background:#fff;border-radius:50%"></div>
<div class="t" style="left:850.40px;top:1022.15px;font-size:14px;color:#212121;letter-spacing:0.25px;">High temperature</div>
<div class="t" style="left:972.90px;top:1022.15px;font-size:14px;color:#9e9e9e;">(1)</div>
<div class="abs" style="left:1144px;top:1019.4px;width:38.5px;height:20px;background:#8c88f2;border-radius:10px"></div>
<div class="abs" style="left:1163.5px;top:1020.9px;width:17px;height:17px;background:#fff;border-radius:50%"></div>
<svg class="i" style="left:818px;top:920px;width:24px;height:24px" viewBox="0 0 24 24"><path fill="#1a1a1a" d="M2.5 2.5h2v17h10v-17h2V21.5h-14z"/><path fill="#1a1a1a" d="M9.5 10 C8 12.5 7.5 13.5 7.5 14.5 a2 2 0 0 0 4 0 C11.5 13.5 11 12.5 9.5 10z"/><path fill="#1a1a1a" d="M19.5 9h2v7h-2zM19.5 17.5h2v2.3h-2z"/></svg>
<svg class="i" style="left:818px;top:969px;width:24px;height:24px" viewBox="0 0 24 24"><path fill="none" stroke="#1a1a1a" stroke-width="2" d="M8 14.5 V5.2 a2 2 0 0 1 4 0 V14.5"/><circle cx="10" cy="17.8" r="3.6" fill="#1a1a1a"/><rect x="8.8" y="9" width="2.4" height="7" fill="#1a1a1a"/><path fill="#1a1a1a" d="M15 7h2.2v8h-2.2zM15 17h2.2v2.5h-2.2z"/></svg>
<svg class="i" style="left:818px;top:1018px;width:24px;height:24px" viewBox="0 0 24 24"><path fill="none" stroke="#1a1a1a" stroke-width="2" d="M8 14.5 V5.2 a2 2 0 0 1 4 0 V14.5"/><circle cx="10" cy="17.8" r="3.6" fill="#1a1a1a"/><rect x="8.8" y="9" width="2.4" height="7" fill="#1a1a1a"/><path fill="#1a1a1a" d="M15 7h2.2v8h-2.2zM15 17h2.2v2.5h-2.2z"/></svg>
<div class="abs" style="left:1223.4px;top:260.7px;width:814.6px;height:429.5px;background:#fff;border-radius:10px;box-shadow:0 2px 6px rgba(0,0,0,0.06),0 0 2px rgba(0,0,0,0.03)"></div>
<div class="t" style="left:1240.00px;top:281.45px;font-size:16px;color:#212121;-webkit-text-stroke:0.3px #212121;">Tanks</div>
<svg class="i" style="left:1917px;top:279px;width:24px;height:24px" viewBox="0 0 24 24"><path fill="#757575" d="M19 13h-6v6h-2v-6H5v-2h6V5h2v6h6v2z"/></svg>
<svg class="i" style="left:1957px;top:279px;width:24px;height:24px" viewBox="0 0 24 24"><path fill="#757575" d="M15.5 14h-.79l-.28-.27C15.41 12.59 16 11.11 16 9.5 16 5.91 13.09 3 9.5 3S3 5.91 3 9.5 5.91 16 9.5 16c1.61 0 3.09-.59 4.23-1.57l.27.28v.79l5 4.99L20.49 19l-4.99-5zm-6 0C7.01 14 5 11.99 5 9.5S7.01 5 9.5 5 14 7.01 14 9.5 11.99 14 9.5 14z"/></svg>
<svg class="i" style="left:1998px;top:278px;width:24px;height:24px" viewBox="0 0 24 24"><path fill="#9e9e9e" d="M14 2H6c-1.1 0-2 .9-2 2v16c0 1.1.9 2 2 2h12c1.1 0 2-.9 2-2V8l-6-6zM13 3.5L18.5 9H13zM8.5 19.5l-1-1 3.3-3.3H9V13.8h4.3v4.3h-1.4v-1.9z"/></svg>
<div class="t" style="left:1240.00px;top:333.84px;font-size:12px;color:#9e9e9e;letter-spacing:0.3px;">Tank label</div>
<div class="t" style="left:1358.40px;top:333.84px;font-size:12px;color:#9e9e9e;letter-spacing:0.3px;">Remaining, %</div>
<div class="t" style="left:1589.00px;top:333.84px;font-size:12px;color:#9e9e9e;letter-spacing:0.3px;">Temperature</div>
<div class="t" style="left:1711.00px;top:333.84px;font-size:12px;color:#9e9e9e;letter-spacing:0.3px;">Battery</div>
<div class="t" style="left:1796.00px;top:333.84px;font-size:12px;color:#9e9e9e;letter-spacing:0.3px;">Connection</div>
<div class="t" style="left:1955.00px;top:333.84px;font-size:12px;color:#9e9e9e;letter-spacing:0.3px;">Actions</div>
<div class="t" style="left:1240.00px;top:382.95px;font-size:14px;color:#333333;letter-spacing:0.3px;">Tank 001</div>
<div class="t" style="left:1367.30px;top:382.95px;font-size:14px;color:#333333;">23% (108L)</div>
<div class="abs" style="left:1461px;top:384.2px;width:104px;height:12px;background:#eeedfd;border-radius:6px"></div>
<div class="abs" style="left:1461px;top:384.2px;width:43.68px;height:12px;background:#afabf1;border-radius:6px"></div>
<div class="t" style="left:1597.60px;top:382.95px;font-size:14px;color:#333333;">26°C</div>
<div class="t" style="left:1720.00px;top:382.95px;font-size:14px;color:#333333;">77%</div>
<div class="abs" style="left:1806px;top:377.8px;width:56px;height:24px;background:#f4faf5;border-radius:12px"></div>
<div class="t" style="left:1813.60px;top:382.95px;font-size:14px;color:#198038;-webkit-text-stroke:0.4px #198038;">Online</div>
<svg class="i" style="left:1932px;top:378.3px;width:24px;height:24px" viewBox="0 0 24 24"><path fill="#8a8a8a" d="M3 17.25V21h3.75L17.81 9.94l-3.75-3.75L3 17.25zM20.71 7.04c.39-.39.39-1.02 0-1.41l-2.34-2.34c-.39-.39-1.02-.39-1.41 0l-1.83 1.83 3.75 3.75 1.83-1.83z"/></svg>
<svg class="i" style="left:1974px;top:378.3px;width:24px;height:24px" viewBox="0 0 24 24"><path fill="#8a8a8a" d="M6 19c0 1.1.9 2 2 2h8c1.1 0 2-.9 2-2V7H6v12zM19 4h-3.5l-1-1h-5l-1 1H5v2h14V4z"/></svg>
<div class="t" style="left:1240.00px;top:439.95px;font-size:14px;color:#333333;letter-spacing:0.3px;">Tank 002</div>
<div class="t" style="left:1367.30px;top:439.95px;font-size:14px;color:#333333;">87% (435L)</div>
<div class="abs" style="left:1461px;top:441.2px;width:104px;height:12px;background:#eeedfd;border-radius:6px"></div>
<div class="abs" style="left:1461px;top:441.2px;width:92.04px;height:12px;background:#afabf1;border-radius:6px"></div>
<div class="t" style="left:1597.60px;top:439.95px;font-size:14px;color:#d12730;-webkit-text-stroke:0.35px #d12730;">-12°C</div>
<div class="t" style="left:1720.00px;top:439.95px;font-size:14px;color:#333333;">65%</div>
<div class="abs" style="left:1806px;top:434.8px;width:56px;height:24px;background:#f4faf5;border-radius:12px"></div>
<div class="t" style="left:1813.60px;top:439.95px;font-size:14px;color:#198038;-webkit-text-stroke:0.4px #198038;">Online</div>
<svg class="i" style="left:1932px;top:435.3px;width:24px;height:24px" viewBox="0 0 24 24"><path fill="#8a8a8a" d="M3 17.25V21h3.75L17.81 9.94l-3.75-3.75L3 17.25zM20.71 7.04c.39-.39.39-1.02 0-1.41l-2.34-2.34c-.39-.39-1.02-.39-1.41 0l-1.83 1.83 3.75 3.75 1.83-1.83z"/></svg>
<svg class="i" style="left:1974px;top:435.3px;width:24px;height:24px" viewBox="0 0 24 24"><path fill="#8a8a8a" d="M6 19c0 1.1.9 2 2 2h8c1.1 0 2-.9 2-2V7H6v12zM19 4h-3.5l-1-1h-5l-1 1H5v2h14V4z"/></svg>
<div class="t" style="left:1240.00px;top:496.95px;font-size:14px;color:#333333;letter-spacing:0.3px;">Tank 003</div>
<div class="t" style="left:1367.30px;top:496.95px;font-size:14px;color:#d12730;-webkit-text-stroke:0.35px #d12730;">10% (50L)</div>
<div class="abs" style="left:1461px;top:498.2px;width:104px;height:12px;background:#fcedee;border-radius:6px"></div>
<div class="abs" style="left:1461px;top:498.2px;width:24.96px;height:12px;background:#d12730;border-radius:6px"></div>
<div class="t" style="left:1597.60px;top:496.95px;font-size:14px;color:#333333;">23°C</div>
<div class="t" style="left:1720.00px;top:496.95px;font-size:14px;color:#333333;">78%</div>
<div class="abs" style="left:1806px;top:491.8px;width:56px;height:24px;background:#f4faf5;border-radius:12px"></div>
<div class="t" style="left:1813.60px;top:496.95px;font-size:14px;color:#198038;-webkit-text-stroke:0.4px #198038;">Online</div>
<svg class="i" style="left:1932px;top:492.3px;width:24px;height:24px" viewBox="0 0 24 24"><path fill="#8a8a8a" d="M3 17.25V21h3.75L17.81 9.94l-3.75-3.75L3 17.25zM20.71 7.04c.39-.39.39-1.02 0-1.41l-2.34-2.34c-.39-.39-1.02-.39-1.41 0l-1.83 1.83 3.75 3.75 1.83-1.83z"/></svg>
<svg class="i" style="left:1974px;top:492.3px;width:24px;height:24px" viewBox="0 0 24 24"><path fill="#8a8a8a" d="M6 19c0 1.1.9 2 2 2h8c1.1 0 2-.9 2-2V7H6v12zM19 4h-3.5l-1-1h-5l-1 1H5v2h14V4z"/></svg>
<div class="t" style="left:1240.00px;top:553.95px;font-size:14px;color:#333333;letter-spacing:0.3px;">Tank 004</div>
<div class="t" style="left:1367.30px;top:553.95px;font-size:14px;color:#333333;">72% (360L)</div>
<div class="abs" style="left:1461px;top:555.1999999999999px;width:104px;height:12px;background:#eeedfd;border-radius:6px"></div>
<div class="abs" style="left:1461px;top:555.1999999999999px;width:74.88px;height:12px;background:#afabf1;border-radius:6px"></div>
<div class="t" style="left:1597.60px;top:553.95px;font-size:14px;color:#333333;">26°C</div>
<div class="t" style="left:1720.00px;top:553.95px;font-size:14px;color:#d12730;-webkit-text-stroke:0.35px #d12730;">7%</div>
<div class="abs" style="left:1806px;top:548.8px;width:56px;height:24px;background:#f4faf5;border-radius:12px"></div>
<div class="t" style="left:1813.60px;top:553.95px;font-size:14px;color:#198038;-webkit-text-stroke:0.4px #198038;">Online</div>
<div class="t" style="left:1240.00px;top:610.95px;font-size:14px;color:#333333;letter-spacing:0.3px;">Tank 005</div>
<div class="t" style="left:1367.30px;top:610.95px;font-size:14px;color:#333333;">64% (320L)</div>
<div class="abs" style="left:1461px;top:612.1999999999999px;width:104px;height:12px;background:#eeedfd;border-radius:6px"></div>
<div class="abs" style="left:1461px;top:612.1999999999999px;width:43.68px;height:12px;background:#afabf1;border-radius:6px"></div>
<div class="t" style="left:1597.60px;top:610.95px;font-size:14px;color:#333333;">22°C</div>
<div class="t" style="left:1720.00px;top:610.95px;font-size:14px;color:#333333;">45%</div>
<div class="abs" style="left:1806px;top:605.8px;width:56px;height:24px;background:#fdf3f3;border-radius:12px"></div>
<div class="t" style="left:1813.60px;top:610.95px;font-size:14px;color:#d12730;-webkit-text-stroke:0.4px #d12730;">Offline</div>
<div class="t" style="left:1240.00px;top:667.95px;font-size:14px;color:#333333;letter-spacing:0.3px;">Tank 006</div>
<div class="t" style="left:1367.30px;top:667.95px;font-size:14px;color:#333333;">25% (354L)</div>
<div class="abs" style="left:1461px;top:669.1999999999999px;width:104px;height:12px;background:#eeedfd;border-radius:6px"></div>
<div class="abs" style="left:1461px;top:669.1999999999999px;width:92.56px;height:12px;background:#afabf1;border-radius:6px"></div>
<div class="t" style="left:1597.60px;top:667.95px;font-size:14px;color:#d12730;-webkit-text-stroke:0.35px #d12730;">68°C</div>
<div class="t" style="left:1720.00px;top:667.95px;font-size:14px;color:#333333;">87%</div>
<div class="abs" style="left:1806px;top:662.8px;width:56px;height:24px;background:#f4faf5;border-radius:12px"></div>
<div class="t" style="left:1813.60px;top:667.95px;font-size:14px;color:#198038;-webkit-text-stroke:0.4px #198038;">Online</div>
<div class="abs" style="left:2028px;top:367px;width:6px;height:25px;background:#d6d6d6;border-radius:3px"></div>
<div class="abs" style="left:1223.5px;top:708.4px;width:814px;height:360px;background:#fff;border-radius:10px;box-shadow:0 2px 6px rgba(0,0,0,0.06),0 0 2px rgba(0,0,0,0.03)"></div>
<div class="t" style="left:1240.00px;top:729.45px;font-size:16px;color:#212121;-webkit-text-stroke:0.3px #212121;">Alarms</div>
<svg class="i" style="left:1875.5px;top:725.5px;width:24px;height:24px" viewBox="0 0 24 24"><path fill="#8a8a8a" d="M19.14 12.94c.04-.3.06-.61.06-.94 0-.32-.02-.64-.07-.94l2.03-1.58c.18-.14.23-.41.12-.61l-1.92-3.32c-.12-.22-.37-.29-.59-.22l-2.39.96c-.5-.38-1.03-.7-1.62-.94l-.36-2.54c-.04-.24-.24-.41-.48-.41h-3.84c-.24 0-.43.17-.47.41l-.36 2.54c-.59.24-1.13.57-1.62.94l-2.39-.96c-.22-.08-.47 0-.59.22L2.74 8.87c-.12.21-.08.47.12.61l2.03 1.58c-.05.3-.09.63-.09.94s.02.64.07.94l-2.03 1.58c-.18.14-.23.41-.12.61l1.92 3.32c.12.22.37.29.59.22l2.39-.96c.5.38 1.03.7 1.62.94l.36 2.54c.05.24.24.41.48.41h3.84c.24 0 .44-.17.47-.41l.36-2.54c.59-.24 1.130-.56 1.62-.94l2.39.96c.22.08.47 0 .59-.22l1.92-3.32c.12-.22.07-.47-.12-.61l-2.01-1.58zM12 15.6c-1.98 0-3.6-1.62-3.6-3.6s1.62-3.6 3.6-3.6 3.6 1.62 3.6 3.6-1.62 3.6-3.6 3.6z"/></svg>
<div class="t" style="left:1240.00px;top:780.84px;font-size:12px;color:#9e9e9e;letter-spacing:0.35px;">Tank label</div>
<div class="t" style="left:1415.50px;top:780.84px;font-size:12px;color:#9e9e9e;letter-spacing:0.35px;">Created time</div>
<div class="t" style="left:1591.60px;top:780.84px;font-size:12px;color:#9e9e9e;letter-spacing:0.35px;">Type</div>
<div class="t" style="left:1768.00px;top:780.84px;font-size:12px;color:#9e9e9e;letter-spacing:0.35px;">Details</div>
<svg class="i" style="left:1495px;top:779px;width:15px;height:15px" viewBox="0 0 24 24"><path fill="#9e9e9e" d="M20 12l-1.41-1.41L13 16.17V4h-2v12.17l-5.58-5.59L4 12l8 8 8-8z"/></svg>
<div class="t" style="left:1240.00px;top:830.65px;font-size:14px;color:#333333;letter-spacing:0.3px;">Tank 001</div>
<div class="t" style="left:1415.50px;top:830.65px;font-size:14px;color:#333333;letter-spacing:0.3px;">2022-11-16 10:56</div>
<div class="t" style="left:1591.60px;top:830.65px;font-size:14px;color:#333333;letter-spacing:0.3px;">Low battery</div>
<div class="t" style="left:1768.00px;top:830.65px;font-size:14px;color:#d12730;letter-spacing:0.3px;-webkit-text-stroke:0.35px #d12730;">7%</div>
<div class="t" style="left:1240.00px;top:887.65px;font-size:14px;color:#333333;letter-spacing:0.3px;">Tank 003</div>
<div class="t" style="left:1415.50px;top:887.65px;font-size:14px;color:#333333;letter-spacing:0.3px;">2022-11-16 11:00</div>
<div class="t" style="left:1591.60px;top:887.65px;font-size:14px;color:#333333;letter-spacing:0.3px;">Low temperature</div>
<div class="t" style="left:1768.00px;top:887.65px;font-size:14px;color:#d12730;letter-spacing:0.3px;-webkit-text-stroke:0.35px #d12730;">-12°C</div>
<div class="t" style="left:1240.00px;top:944.65px;font-size:14px;color:#333333;letter-spacing:0.3px;">Tank 004</div>
<div class="t" style="left:1415.50px;top:944.65px;font-size:14px;color:#333333;letter-spacing:0.3px;">2022-11-16 11:15</div>
<div class="t" style="left:1591.60px;top:944.65px;font-size:14px;color:#333333;letter-spacing:0.3px;">Low remaining level</div>
<div class="t" style="left:1768.00px;top:944.65px;font-size:14px;color:#d12730;letter-spacing:0.3px;-webkit-text-stroke:0.35px #d12730;">10% (354L)</div>
<div class="t" style="left:1240.00px;top:1001.65px;font-size:14px;color:#333333;letter-spacing:0.3px;">Tank 006</div>
<div class="t" style="left:1415.50px;top:1001.65px;font-size:14px;color:#333333;letter-spacing:0.3px;">2022-11-16 11:15</div>
<div class="t" style="left:1591.60px;top:1001.65px;font-size:14px;color:#333333;letter-spacing:0.3px;">High temperature</div>
<div class="t" style="left:1768.00px;top:1001.65px;font-size:14px;color:#d12730;letter-spacing:0.3px;-webkit-text-stroke:0.35px #d12730;">60°C</div>
<div class="abs" style="left:1918.75px;top:528px;width:361px;height:788.7px;background:#f5f5f5;border-radius:20px 20px 12px 12px;box-shadow:0 6px 28px rgba(0,0,0,0.16),0 0 6px rgba(0,0,0,0.06)"></div>
<div class="abs" style="left:1918.75px;top:528px;width:361px;height:81.4px;background:#00695c;border-radius:20px 20px 0 0"></div>
<div class="t" style="left:1937.50px;top:539.21px;font-size:19px;color:#fff;letter-spacing:0.2px;-webkit-text-stroke:0.8px #fff;">Fuel Level Monitoring</div>
<svg class="i" style="left:1937px;top:576px;width:23.3px;height:23.3px" viewBox="0 0 24 24"><path fill="#fff" d="M11.99 2C6.47 2 2 6.48 2 12s4.47 10 9.99 10C17.52 22 22 17.52 22 12S17.52 2 11.99 2zM12 20c-4.42 0-8-3.58-8-8s3.58-8 8-8 8 3.58 8 8-3.58 8-8 8zm.5-13H11v6l5.25 3.15.75-1.23-4.5-2.67z"/></svg>
<svg class="i" style="left:2086.2px;top:575.9px;width:23px;height:23px" viewBox="0 0 24 24"><path fill="#fff" d="M19 9h-4V3H9v6H5l7 7 7-7zM5 18v2h14v-2H5z"/></svg>
<svg class="i" style="left:2237.8px;top:575px;width:24.3px;height:24.3px" viewBox="0 0 24 24"><path fill="#fff" d="M7 14H5v5h5v-2H7v-3zm-2-4h2V7h3V5H5v5zm12 7h-3v2h5v-5h-2v3zM14 5v2h3v3h2V5h-5z"/></svg>
<div class="abs" style="left:1930.6px;top:611.5px;width:336.4px;height:342.2px;background:#fff;border-radius:10px;box-shadow:0 1px 4px rgba(0,0,0,0.06)"></div>
<svg class="i" style="left:1939px;top:619.4px;width:317px;height:281px;overflow:hidden" viewBox="0 0 317 281">
<rect width="317" height="281" fill="#f3efe8"/>
<g fill="none" stroke="#dcd6cc" stroke-width="0.7">
<path d="M5 50 V115 M12 50 V115 M20 50 V115 M5 60 H35 M5 75 H35 M5 90 H35 M5 105 H35"/>
<path d="M155 60 V110 M165 60 V110 M175 60 V110 M150 70 H185 M150 80 H185 M150 90 H185 M150 100 H185"/>
<path d="M150 130 V260 M160 150 V260 M170 150 V260 M180 150 V260 M190 150 V260 M200 150 V260 M140 200 H220 M140 215 H220 M140 230 H220 M140 245 H220"/>
<path d="M240 120 V260 M255 130 V260 M270 150 V260 M285 130 V260 M295 130 V260 M240 200 H300 M240 225 H300"/>
<path d="M60 0 Q80 20 110 30 M75 0 Q95 25 130 32 M110 0 Q130 10 150 20 M170 0 L120 40 M190 0 L140 40"/>
<path d="M30 120 V180 M40 120 V180 M20 230 H60 M20 250 H60 M100 150 H140 M100 165 H140 M100 125 V150 M118 125 V150"/>
<path d="M8 125 H55 M8 135 H55 M8 145 H55 M20 120 V180 M48 120 V150 M75 120 V150 M75 130 H105 M80 195 V240 M90 195 V240 M80 205 H100 M5 230 H45 M5 245 H45 M20 265 V281 M40 265 V281 M60 5 H100 M60 20 H100"/>
<path d="M195 150 Q205 160 210 170 M250 40 V110 M265 40 V110 M280 60 H310 M280 80 H310"/>
</g>
<g fill="#cde3c1">
<rect x="148.5" y="118.7" width="35.9" height="23.3"/>
<rect x="65.7" y="153" width="25" height="32.9"/>
<rect x="42.25" y="189" width="23.45" height="26.6"/>
<rect x="20" y="70" width="35" height="40" opacity="0.5"/>
<rect x="75" y="0" width="40" height="6"/>
<rect x="300" y="115" width="17" height="60" opacity="0.6"/>
</g>
<g fill="#a9c7e6"><path d="M87 82 q4 0 4 6 v6 h-6 z"/><rect x="113.3" y="153" width="3" height="31"/><path d="M92 108 l6 6 -3 3 -6 -6z"/></g>
<g fill="none" stroke-linecap="round" stroke-linejoin="round">
<g stroke="#d9b57a" stroke-width="4.4">
<path d="M0 43.7 H317"/><path d="M0 115.6 H317"/><path d="M68.8 185.9 H317"/><path d="M0 259.4 H317"/>
<path d="M145.4 -5 V290"/><path d="M184.4 43.7 V115.6"/><path d="M304.75 -5 V290"/>
<path d="M58 115.6 Q59 150 68.5 175 L70 290"/>
<path d="M215.7 -5 L229.75 109.4 Q236 140 251.6 156 L270 290"/>
<path d="M204.75 115.6 Q206 140 222 150 L235 160"/>
<path d="M0 189 L68.8 221.9 L139 259.4"/>
<path d="M111 230 L130 259 L139 290"/>
<path d="M40 0 V43.7"/>
</g>
<g stroke="#eccf98" stroke-width="3">
<path d="M0 43.7 H317"/><path d="M0 115.6 H317"/><path d="M68.8 185.9 H317"/><path d="M0 259.4 H317"/>
<path d="M145.4 -5 V290"/><path d="M184.4 43.7 V115.6"/><path d="M304.75 -5 V290"/>
<path d="M58 115.6 Q59 150 68.5 175 L70 290"/>
<path d="M215.7 -5 L229.75 109.4 Q236 140 251.6 156 L270 290"/>
<path d="M204.75 115.6 Q206 140 222 150 L235 160"/>
<path d="M0 189 L68.8 221.9 L139 259.4"/>
<path d="M111 230 L130 259 L139 290"/>
<path d="M40 0 V43.7"/>
</g>
<path d="M238 150 L262 290" stroke="#c9c9d4" stroke-width="1"/>
<path d="M-5 10 L45 50 Q80 75 95 98 Q108 118 109.5 150 L111 290" stroke="#d19a52" stroke-width="7.5" stroke-linecap="butt"/>
<path d="M-5 10 L45 50 Q80 75 95 98 Q108 118 109.5 150 L111 290" stroke="#e6ae66" stroke-width="5.5" stroke-linecap="butt"/>
</g>
<g font-family="Liberation Sans" fill="#6a6a6a">
<text transform="translate(142,3) rotate(90)" font-size="6.5">Street</text>
<text transform="translate(143,177) rotate(90)" font-size="8">Division Street</text>
<text transform="translate(228,150) rotate(82)" font-size="7">60th Street East</text>
<text x="255" y="48" font-size="7">East Avenue P</text>
<text x="259" y="189" font-size="7">East Avenue</text>
<text x="5" y="118" font-size="7.5">Te</text><text x="42" y="118" font-size="7.5">gy Dr.</text>
<text transform="translate(72,280) rotate(-90)" font-size="6">West</text>
</g>
<text transform="translate(14,46) rotate(-58)" font-family="Liberation Sans" font-size="8" fill="#5b86b8">An</text>
<text transform="translate(24,18) rotate(-90)" font-family="Liberation Sans" font-size="7" fill="#5b86b8">05</text>
<g font-family="Liberation Sans" font-size="5.5" font-weight="700" fill="#333">
<rect x="100" y="208" width="19" height="9.5" rx="4" fill="#fff" stroke="#666" stroke-width="0.7"/><text x="103" y="215">138</text>
<rect x="72" y="223.5" width="14" height="8" rx="1" fill="#fff" stroke="#666" stroke-width="0.7"/><text x="74.5" y="230">N2</text>
</g>
<text x="222" y="270.5" font-family="Liberation Sans" font-size="17" fill="#333" letter-spacing="0.5">Palmdale</text>
</svg>
<div class="abs" style="left:2040.10px;top:712.60px;width:26px;height:26px;background:#fff;border:1.5px solid #c74348;border-radius:5px"></div>
<svg class="i" style="left:2043.10px;top:714.10px;width:20px;height:24px" viewBox="-3 -2 20 24"><g transform="translate(0.00,0.00) scale(1.0)"><path fill="#d42a2f" d="M0.3 3 C0.3 1 3.3 0 7 0 C10.7 0 13.7 1 13.7 3 V17 C13.7 19 10.7 20 7 20 C3.3 20 0.3 19 0.3 17 Z"/><path fill="none" stroke="#fff" stroke-width="0.9" d="M0.3 4.6 C2.5 6.6 11.5 6.6 13.7 4.6 M0.3 11.2 C2.5 13.2 11.5 13.2 13.7 11.2"/><ellipse cx="10" cy="2.1" rx="1.5" ry="0.8" fill="#fff"/></g></svg>
<div class="abs" style="left:2146.40px;top:701.70px;width:26px;height:26px;background:#fff;border:1.5px solid #2d7d46;border-radius:5px"></div>
<svg class="i" style="left:2149.40px;top:703.20px;width:20px;height:24px" viewBox="-3 -2 20 24"><g transform="translate(0.00,0.00) scale(1.0)"><path fill="#1b7a35" d="M0.3 3 C0.3 1 3.3 0 7 0 C10.7 0 13.7 1 13.7 3 V17 C13.7 19 10.7 20 7 20 C3.3 20 0.3 19 0.3 17 Z"/><path fill="none" stroke="#fff" stroke-width="0.9" d="M0.3 4.6 C2.5 6.6 11.5 6.6 13.7 4.6 M0.3 11.2 C2.5 13.2 11.5 13.2 13.7 11.2"/><ellipse cx="10" cy="2.1" rx="1.5" ry="0.8" fill="#fff"/></g></svg>
<div class="abs" style="left:2180.75px;top:778.25px;width:26px;height:26px;background:#fff;border:1.5px solid #2d7d46;border-radius:5px"></div>
<svg class="i" style="left:2183.75px;top:779.75px;width:20px;height:24px" viewBox="-3 -2 20 24"><g transform="translate(0.00,0.00) scale(1.0)"><path fill="#1b7a35" d="M0.3 3 C0.3 1 3.3 0 7 0 C10.7 0 13.7 1 13.7 3 V17 C13.7 19 10.7 20 7 20 C3.3 20 0.3 19 0.3 17 Z"/><path fill="none" stroke="#fff" stroke-width="0.9" d="M0.3 4.6 C2.5 6.6 11.5 6.6 13.7 4.6 M0.3 11.2 C2.5 13.2 11.5 13.2 13.7 11.2"/><ellipse cx="10" cy="2.1" rx="1.5" ry="0.8" fill="#fff"/></g></svg>
<div class="abs" style="left:2000.10px;top:854.80px;width:26px;height:26px;background:#fff;border:1.5px solid #2d7d46;border-radius:5px"></div>
<svg class="i" style="left:2003.10px;top:856.30px;width:20px;height:24px" viewBox="-3 -2 20 24"><g transform="translate(0.00,0.00) scale(1.0)"><path fill="#1b7a35" d="M0.3 3 C0.3 1 3.3 0 7 0 C10.7 0 13.7 1 13.7 3 V17 C13.7 19 10.7 20 7 20 C3.3 20 0.3 19 0.3 17 Z"/><path fill="none" stroke="#fff" stroke-width="0.9" d="M0.3 4.6 C2.5 6.6 11.5 6.6 13.7 4.6 M0.3 11.2 C2.5 13.2 11.5 13.2 13.7 11.2"/><ellipse cx="10" cy="2.1" rx="1.5" ry="0.8" fill="#fff"/></g></svg>
<div class="abs" style="left:1954.7px;top:636.6px;width:29.7px;height:57.8px;background:#fff;border-radius:5px"></div>
<svg class="i" style="left:1957.5px;top:638.5px;width:24px;height:24px" viewBox="0 0 24 24"><path fill="#8a8a8a" d="M19 13h-6v6h-2v-6H5v-2h6V5h2v6h6v2z"/></svg>
<svg class="i" style="left:1957.5px;top:668px;width:24px;height:24px" viewBox="0 0 24 24"><path fill="#8a8a8a" d="M19 13H5v-2h14v2z"/></svg>
<div class="abs" style="left:1955.6px;top:716.25px;width:27.2px;height:28.2px;background:#fff;border-radius:5px"></div>
<svg class="i" style="left:1957.4px;top:718px;width:24px;height:24px" viewBox="0 0 24 24"><path fill="#8f8f8f" d="M12 2C8.13 2 5 5.13 5 9c0 5.25 7 13 7 13s7-7.75 7-13c0-3.87-3.13-7-7-7zm0 9.5c-1.38 0-2.5-1.12-2.5-2.5s1.12-2.5 2.5-2.5 2.5 1.12 2.5 2.5-1.12 2.5-2.5 2.5z"/></svg>
<div class="abs" style="left:1955.6px;top:764.7px;width:27.2px;height:28.1px;background:#fff;border-radius:5px"></div>
<svg class="i" style="left:1959px;top:768px;width:21px;height:21px" viewBox="0 0 24 24"><path fill="#8f8f8f" d="M10 9h4V6h3l-5-5-5 5h3v3zm-1 1H6V7l-5 5 5 5v-3h3v-4zm14 2l-5-5v3h-3v4h3v3l5-5zm-9 3h-4v3H7l5 5 5-5h-3v-3z"/></svg>
<div class="abs" style="left:2212.5px;top:635px;width:26.5px;height:28px;background:#fff;border-radius:5px"></div>
<svg class="i" style="left:2214.2px;top:637.5px;width:23px;height:23px" viewBox="0 0 24 24"><path fill="#9a9a9a" d="M7 14H5v5h5v-2H7v-3zm-2-4h2V7h3V5H5v5zm12 7h-3v2h5v-5h-2v3zM14 5v2h3v3h2V5h-5z"/></svg>
<div class="abs" style="left:1931px;top:957.4px;width:335.8px;height:305.3px;background:#fff;border-radius:10px;box-shadow:0 1px 4px rgba(0,0,0,0.06)"></div>
<div class="t" style="left:1947.00px;top:977.57px;font-size:13.5px;color:#212121;-webkit-text-stroke:0.25px #212121;">Tanks</div>
<svg class="i" style="left:2153.6px;top:974.5px;width:20px;height:20px" viewBox="0 0 24 24"><path fill="#757575" d="M19 13h-6v6h-2v-6H5v-2h6V5h2v6h6v2z"/></svg>
<svg class="i" style="left:2191px;top:974.5px;width:21px;height:21px" viewBox="0 0 24 24"><path fill="#757575" d="M15.5 14h-.79l-.28-.27C15.41 12.59 16 11.11 16 9.5 16 5.91 13.09 3 9.5 3S3 5.91 3 9.5 5.91 16 9.5 16c1.61 0 3.09-.59 4.23-1.57l.27.28v.79l5 4.99L20.49 19l-4.99-5zm-6 0C7.01 14 5 11.99 5 9.5S7.01 5 9.5 5 14 7.01 14 9.5 11.99 14 9.5 14z"/></svg>
<svg class="i" style="left:2229.5px;top:973.5px;width:21px;height:21px" viewBox="0 0 24 24"><path fill="#9e9e9e" d="M14 2H6c-1.1 0-2 .9-2 2v16c0 1.1.9 2 2 2h12c1.1 0 2-.9 2-2V8l-6-6zM13 3.5L18.5 9H13zM8.5 19.5l-1-1 3.3-3.3H9V13.8h4.3v4.3h-1.4v-1.9z"/></svg>
<div class="t" style="left:1947.00px;top:1023.69px;font-size:11px;color:#a0a0a0;">Tank label</div>
<div class="t" style="left:2034.60px;top:1023.69px;font-size:11px;color:#a0a0a0;">Remaining, %</div>
<div class="t" style="left:2216.60px;top:1023.69px;font-size:11px;color:#a0a0a0;">Temp...</div>
<div class="t" style="left:1947.00px;top:1062.54px;font-size:12px;color:#333333;">Tank 001</div>
<div class="t" style="left:2033.00px;top:1062.54px;font-size:12px;color:#333333;">23% (108L)</div>
<div class="abs" style="left:2111.6px;top:1063.5px;width:71.2px;height:11px;background:#eeedfd;border-radius:5.5px"></div>
<div class="abs" style="left:2111.6px;top:1063.5px;width:19.8px;height:11px;background:#afabf1;border-radius:5.5px"></div>
<div class="t" style="left:2215.80px;top:1062.54px;font-size:12px;color:#333333;">26°C</div>
<div class="t" style="left:1947.00px;top:1100.94px;font-size:12px;color:#333333;">Tank 001</div>
<div class="t" style="left:2033.00px;top:1100.94px;font-size:12px;color:#333333;">23% (108L)</div>
<div class="abs" style="left:2111.6px;top:1101.9px;width:71.2px;height:11px;background:#eeedfd;border-radius:5.5px"></div>
<div class="abs" style="left:2111.6px;top:1101.9px;width:19.8px;height:11px;background:#afabf1;border-radius:5.5px"></div>
<div class="t" style="left:2215.80px;top:1100.94px;font-size:12px;color:#333333;">26°C</div>
<div class="t" style="left:1947.00px;top:1139.34px;font-size:12px;color:#333333;">Tank 001</div>
<div class="t" style="left:2033.00px;top:1139.34px;font-size:12px;color:#333333;">23% (108L)</div>
<div class="abs" style="left:2111.6px;top:1140.3px;width:71.2px;height:11px;background:#eeedfd;border-radius:5.5px"></div>
<div class="abs" style="left:2111.6px;top:1140.3px;width:19.8px;height:11px;background:#afabf1;border-radius:5.5px"></div>
<div class="t" style="left:2215.80px;top:1139.34px;font-size:12px;color:#333333;">26°C</div>
<div class="t" style="left:1947.00px;top:1177.74px;font-size:12px;color:#333333;">Tank 001</div>
<div class="t" style="left:2033.00px;top:1177.74px;font-size:12px;color:#333333;">23% (108L)</div>
<div class="abs" style="left:2111.6px;top:1178.7px;width:71.2px;height:11px;background:#eeedfd;border-radius:5.5px"></div>
<div class="abs" style="left:2111.6px;top:1178.7px;width:19.8px;height:11px;background:#afabf1;border-radius:5.5px"></div>
<div class="t" style="left:2215.80px;top:1177.74px;font-size:12px;color:#333333;">26°C</div>
<div class="t" style="left:1947.00px;top:1216.14px;font-size:12px;color:#333333;">Tank 001</div>
<div class="t" style="left:2033.00px;top:1216.14px;font-size:12px;color:#333333;">23% (108L)</div>
<div class="abs" style="left:2111.6px;top:1217.1px;width:71.2px;height:11px;background:#eeedfd;border-radius:5.5px"></div>
<div class="abs" style="left:2111.6px;top:1217.1px;width:19.8px;height:11px;background:#afabf1;border-radius:5.5px"></div>
<div class="t" style="left:2215.80px;top:1216.14px;font-size:12px;color:#333333;">26°C</div>
<div class="abs" style="left:2258px;top:1054px;width:5.6px;height:14.7px;background:#d0d0d0;border-radius:3px"></div>
<div class="abs" style="left:1933px;top:1248px;width:23px;height:5.4px;background:#d0d0d0;border-radius:3px"></div>
<div class="abs" style="left:1931px;top:1266.6px;width:336px;height:50.1px;background:#fff;border-radius:10px 10px 0 0"></div>
<div class="t" style="left:1947.00px;top:1286.87px;font-size:13.5px;color:#212121;-webkit-text-stroke:0.25px #212121;">Alarms</div>
<svg class="i" style="left:2153.6px;top:1283.5px;width:20px;height:20px" viewBox="0 0 24 24"><path fill="#757575" d="M19 13h-6v6h-2v-6H5v-2h6V5h2v6h6v2z"/></svg>
<svg class="i" style="left:2191px;top:1283.5px;width:21px;height:21px" viewBox="0 0 24 24"><path fill="#757575" d="M15.5 14h-.79l-.28-.27C15.41 12.59 16 11.11 16 9.5 16 5.91 13.09 3 9.5 3S3 5.91 3 9.5 5.91 16 9.5 16c1.61 0 3.09-.59 4.23-1.57l.27.28v.79l5 4.99L20.49 19l-4.99-5zm-6 0C7.01 14 5 11.99 5 9.5S7.01 5 9.5 5 14 7.01 14 9.5 11.99 14 9.5 14z"/></svg>
<svg class="i" style="left:2229.5px;top:1282.5px;width:21px;height:21px" viewBox="0 0 24 24"><path fill="#9e9e9e" d="M14 2H6c-1.1 0-2 .9-2 2v16c0 1.1.9 2 2 2h12c1.1 0 2-.9 2-2V8l-6-6zM13 3.5L18.5 9H13zM8.5 19.5l-1-1 3.3-3.3H9V13.8h4.3v4.3h-1.4v-1.9z"/></svg>
</body></html>
